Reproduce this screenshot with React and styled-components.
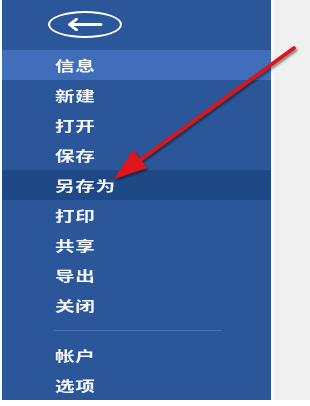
import React from 'react';
import styled, { createGlobalStyle } from 'styled-components';

const GlobalStyle = createGlobalStyle`
  html, body {
    margin: 0;
    padding: 0;
    background: #ffffff;
  }
  body {
    font-family: "Noto Sans CJK SC", "Noto Sans", sans-serif;
  }
`;

const items = [
  { label: '信息', state: 'active' },
  { label: '新建' },
  { label: '打开' },
  { label: '保存' },
  { label: '另存为', state: 'pressed' },
  { label: '打印' },
  { label: '共享' },
  { label: '导出' },
  { label: '关闭' },
];

const bottomItems = [{ label: '帐户' }, { label: '选项' }];

const rowBg = {
  active: '#416ebb',
  pressed: '#1f4986',
};

export default function App() {
  return (
    <>
      <GlobalStyle />
      <Page>
        <Sidebar>
          <Header>
            <BackButton aria-label="返回">
              <svg width="36" height="13" viewBox="0 0 36 13">
                <path
                  d="M34 6.5 H3 M9.5 1.2 L2.5 6.5 L9.5 11.8"
                  fill="none"
                  stroke="#fff"
                  strokeWidth="2.8"
                  strokeLinecap="round"
                  strokeLinejoin="round"
                />
              </svg>
            </BackButton>
          </Header>
          {items.map((item) => (
            <MenuRow key={item.label} $state={item.state}>
              <Label>{item.label}</Label>
            </MenuRow>
          ))}
          <Separator />
          {bottomItems.map((item) => (
            <MenuRow key={item.label}>
              <Label>{item.label}</Label>
            </MenuRow>
          ))}
        </Sidebar>
        <Strip />
        <Content />
        <Arrow width="310" height="406" viewBox="0 0 310 406">
          <defs>
            <filter id="shade" x="-20%" y="-20%" width="140%" height="140%">
              <feDropShadow dx="1.5" dy="2" stdDeviation="1.2" floodColor="#000" floodOpacity="0.45" />
            </filter>
          </defs>
          <g filter="url(#shade)">
            <line x1="294" y1="48" x2="136" y2="163" stroke="#d8151d" strokeWidth="3.8" strokeLinecap="round" />
            <polygon points="114,179 147,168 133,150" fill="#e0141c" />
          </g>
        </Arrow>
      </Page>
    </>
  );
}

const Page = styled.div`
  position: relative;
  display: flex;
  width: 310px;
  height: 406px;
  padding: 0 0 6px 2px;
  box-sizing: border-box;
  background: #ffffff;
  overflow: hidden;
`;

const Sidebar = styled.nav`
  display: flex;
  flex-direction: column;
  width: 269px;
  flex-shrink: 0;
  background: #2b579a;
  overflow: hidden;
`;

const Header = styled.div`
  display: flex;
  align-items: center;
  height: 52px;
  padding-left: 46px;
  box-sizing: border-box;
`;

const BackButton = styled.button`
  display: flex;
  align-items: center;
  justify-content: center;
  width: 74px;
  height: 27px;
  padding: 0;
  border: 2.5px solid #ffffff;
  border-radius: 50%;
  background: transparent;
  margin-top: -2px;
`;

const MenuRow = styled.div`
  display: flex;
  align-items: center;
  height: 30px;
  flex-shrink: 0;
  padding-left: 53px;
  background: ${(p) => (p.$state ? rowBg[p.$state] : 'transparent')};
`;

const Label = styled.span`
  display: inline-block;
  color: #f4f7fc;
  font-size: 13.5px;
  font-weight: 700;
  letter-spacing: 0.5px;
  transform: scaleX(1.45);
  transform-origin: left center;
`;

const Separator = styled.div`
  height: 1px;
  margin: 10px 50px 9px 52px;
  background: #4a73b0;
  flex-shrink: 0;
`;

const Strip = styled.div`
  width: 3px;
  background: #fbfbfb;
`;

const Content = styled.div`
  flex: 1;
  background: #f0f0f0;
`;

const Arrow = styled.svg`
  position: absolute;
  left: 0;
  top: 0;
  pointer-events: none;
`;
